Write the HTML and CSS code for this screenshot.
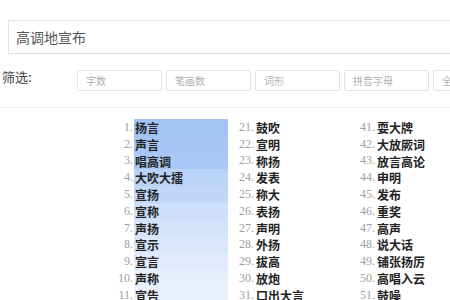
FILE: index.html
```html
<!DOCTYPE html>
<html>
<head>
<meta name="viewport" content="width=device-width, initial-scale=1">
<title>高调地宣布</title>
<link rel="stylesheet" href="styles.css">
</head>
<body>

<div class="search">
  <input type="text" class="searchInput" value="高调地宣布">
</div>

<div class="filter">
  <span class="filterLabel">筛选:</span>
  <input type="text" class="filterBox" placeholder="字数">
  <input type="text" class="filterBox" placeholder="笔画数">
  <input type="text" class="filterBox" placeholder="词形">
  <input type="text" class="filterBox" placeholder="拼音字母">
  <input type="text" class="filterBox" placeholder="全部">
</div>

<div class="words">
  <ul class="col">
    <li><span class="num">1.</span><span class="word hl" style="background:#a3c3f4">扬言</span></li>
    <li><span class="num">2.</span><span class="word hl" style="background:#a6c5f4">声言</span></li>
    <li><span class="num">3.</span><span class="word hl" style="background:#aac8f5">唱高调</span></li>
    <li><span class="num">4.</span><span class="word hl" style="background:#bad3f7">大吹大擂</span></li>
    <li><span class="num">5.</span><span class="word hl" style="background:#c0d7f8">宣扬</span></li>
    <li><span class="num">6.</span><span class="word hl" style="background:#cddffa">宣称</span></li>
    <li><span class="num">7.</span><span class="word hl" style="background:#d3e3fa">声扬</span></li>
    <li><span class="num">8.</span><span class="word hl" style="background:#d9e7fb">宣示</span></li>
    <li><span class="num">9.</span><span class="word hl" style="background:#e1ebfc">宣言</span></li>
    <li><span class="num">10.</span><span class="word hl" style="background:#e6effc">声称</span></li>
    <li><span class="num">11.</span><span class="word hl" style="background:#eaf1fd">宣告</span></li>
  </ul>
  <ul class="col">
    <li><span class="num">21.</span><span class="word">鼓吹</span></li>
    <li><span class="num">22.</span><span class="word">宣明</span></li>
    <li><span class="num">23.</span><span class="word">称扬</span></li>
    <li><span class="num">24.</span><span class="word">发表</span></li>
    <li><span class="num">25.</span><span class="word">称大</span></li>
    <li><span class="num">26.</span><span class="word">表扬</span></li>
    <li><span class="num">27.</span><span class="word">声明</span></li>
    <li><span class="num">28.</span><span class="word">外扬</span></li>
    <li><span class="num">29.</span><span class="word">拔高</span></li>
    <li><span class="num">30.</span><span class="word">放炮</span></li>
    <li><span class="num">31.</span><span class="word">口出大言</span></li>
  </ul>
  <ul class="col">
    <li><span class="num">41.</span><span class="word">耍大牌</span></li>
    <li><span class="num">42.</span><span class="word">大放厥词</span></li>
    <li><span class="num">43.</span><span class="word">放言高论</span></li>
    <li><span class="num">44.</span><span class="word">申明</span></li>
    <li><span class="num">45.</span><span class="word">发布</span></li>
    <li><span class="num">46.</span><span class="word">重奖</span></li>
    <li><span class="num">47.</span><span class="word">高声</span></li>
    <li><span class="num">48.</span><span class="word">说大话</span></li>
    <li><span class="num">49.</span><span class="word">铺张扬厉</span></li>
    <li><span class="num">50.</span><span class="word">高唱入云</span></li>
    <li><span class="num">51.</span><span class="word">鼓噪</span></li>
  </ul>
</div>

</body>
</html>
```

FILE: styles.css
```css
body {
  margin: 0;
  width: 450px;
  height: 300px;
  overflow: hidden;
  font-family: "Liberation Sans", "Noto Sans CJK SC", sans-serif;
  background: #fff;
}

* {
  box-sizing: border-box;
}

/* search bar */
.search {
  padding: 20px 0 0 8px;
}

.searchInput {
  width: 480px;
  height: 34px;
  margin: 0;
  padding: 0 7px;
  border: 1px solid #e0e0e0;
  border-radius: 0;
  font-size: 14px;
  font-family: "Noto Sans CJK SC", sans-serif;
  color: #555;
  outline: none;
}

/* filter row */
.filter {
  display: flex;
  align-items: center;
  gap: 4px;
  height: 54px;
  padding: 0 0 0 2px;
  border-bottom: 1px solid #f2f2f2;
  white-space: nowrap;
}

.filterLabel {
  flex: 0 0 71px;
  font-size: 13px;
  font-family: "Noto Sans CJK SC", sans-serif;
  color: #444;
  margin-top: -8px;
}

.filterBox {
  flex: 0 0 85px;
  width: 85px;
  height: 21px;
  margin: 0;
  padding: 0 8px;
  border: 1px solid #e2e2e2;
  border-radius: 2px;
  font-size: 10px;
  font-family: "Noto Sans CJK SC", sans-serif;
  color: #555;
  outline: none;
}

.filterBox::placeholder {
  color: #b0b0b0;
}

/* word list */
.words {
  display: flex;
  padding: 11px 0 0 112px;
}

.col {
  flex: 0 0 121px;
  list-style: none;
  margin: 0;
  padding: 0;
}

.col li {
  display: flex;
  align-items: center;
  height: 16.8px;
}

.num {
  flex: 0 0 22px;
  padding-right: 1px;
  text-align: right;
  font-family: "Liberation Serif", serif;
  font-size: 12px;
  color: #a0a0a0;
}

.word {
  display: flex;
  align-items: center;
  height: 100%;
  padding-left: 1px;
  font-family: "Noto Sans CJK SC", sans-serif;
  font-weight: bold;
  font-size: 12px;
  color: #222;
  white-space: nowrap;
}

.hl {
  width: 94px;
}
```
